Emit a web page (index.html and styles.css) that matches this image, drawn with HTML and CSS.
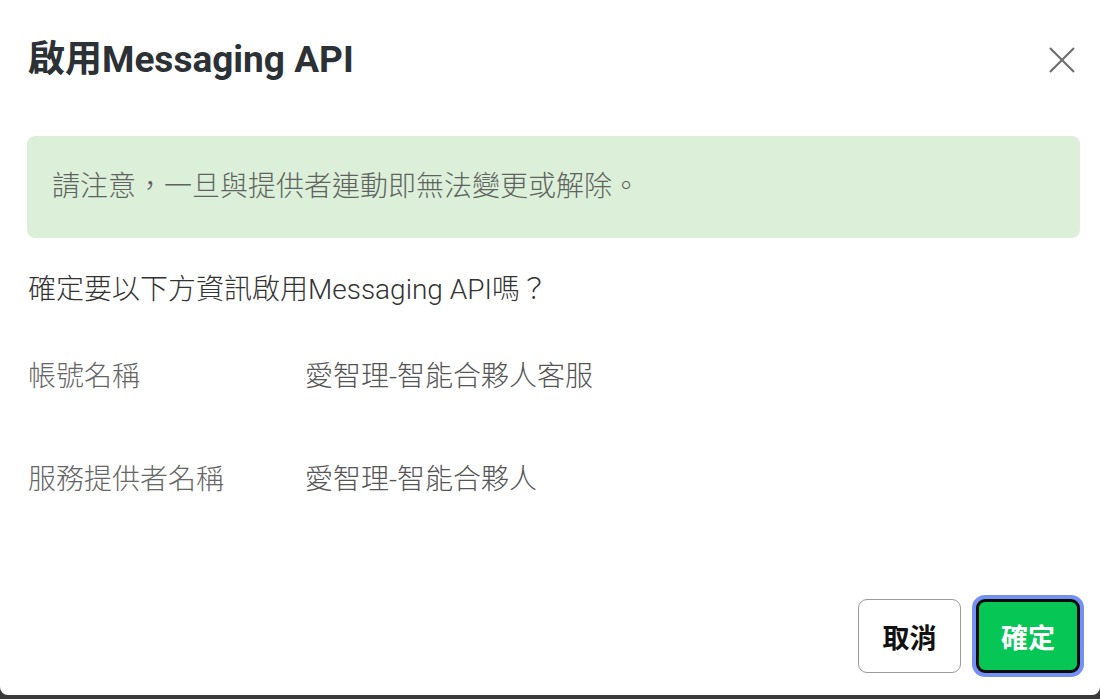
FILE: index.html
```html
<!DOCTYPE html>
<html lang="zh-Hant">
<head>
<meta charset="utf-8">
<title>啟用Messaging API</title>
<link rel="stylesheet" href="styles.css">
</head>
<body>
<div class="modal">
  <header class="modal-header">
    <h1 class="modal-title">啟用Messaging API</h1>
    <button class="close" aria-label="關閉">
      <svg width="26" height="26" viewBox="0 0 26 26"><path d="M1 1L25 25M25 1L1 25" stroke="#6f6f6f" stroke-width="2.2" fill="none"/></svg>
    </button>
  </header>
  <div class="notice">請注意，一旦與提供者連動即無法變更或解除。</div>
  <p class="question">確定要以下方資訊啟用Messaging API嗎？</p>
  <dl class="info">
    <dt>帳號名稱</dt><dd>愛智理-智能合夥人客服</dd>
    <dt>服務提供者名稱</dt><dd>愛智理-智能合夥人</dd>
  </dl>
  <div class="actions">
    <button class="btn btn-cancel">取消</button>
    <button class="btn btn-primary">確定</button>
  </div>
</div>
</body>
</html>
```

FILE: styles.css
```css
html, body {
  margin: 0;
  padding: 0;
  height: 100%;
  background: #3a3a3a;
}

body {
  font-family: Roboto, "Noto Sans CJK TC", sans-serif;
  overflow: hidden;
}

.modal {
  box-sizing: border-box;
  height: 695px;
  background: #fff;
  border-radius: 0 0 8px 8px;
  padding: 40px 20px 0 27px;
  display: flex;
  flex-direction: column;
}

.modal-header {
  display: flex;
  align-items: center;
  justify-content: space-between;
  height: 40px;
}

.modal-title {
  margin: 0 0 0 1px;
  font-size: 37px;
  line-height: 40px;
  font-weight: 700;
  color: #2c3136;
}

.close {
  border: 0;
  background: none;
  padding: 0;
  margin-right: 5px;
  display: flex;
  cursor: pointer;
}

.notice {
  margin-top: 56px;
  height: 102px;
  box-sizing: border-box;
  padding: 33px 25px;
  background: #dcf0d9;
  border-radius: 8px;
  font-size: 28px;
  line-height: 36px;
  font-weight: 300;
  color: #5f635f;
}

.question {
  margin: 34px 0 0 1px;
  font-size: 28px;
  line-height: 36px;
  font-weight: 300;
  color: #333;
}

.info {
  margin: 51px 0 0 1px;
  display: grid;
  grid-template-columns: 277px 1fr;
  row-gap: 67px;
  font-size: 28px;
  line-height: 36px;
  font-weight: 300;
}

.info dt {
  color: #666;
}

.info dd {
  margin: 0;
  color: #555;
}

.actions {
  margin-top: auto;
  margin-bottom: 22px;
  display: flex;
  justify-content: flex-end;
  gap: 15px;
}

.btn {
  height: 74px;
  box-sizing: border-box;
  border-radius: 9px;
  font-family: inherit;
  font-size: 27px;
  font-weight: 700;
  cursor: pointer;
}

.btn-cancel {
  width: 103px;
  background: #fff;
  border: 1px solid #9a9a9a;
  color: #111;
}

.btn-primary {
  width: 104px;
  background: #06c755;
  border: 3px solid #0b0b0b;
  color: #fff;
  box-shadow: 0 0 0 4px #7391f3;
}
```
